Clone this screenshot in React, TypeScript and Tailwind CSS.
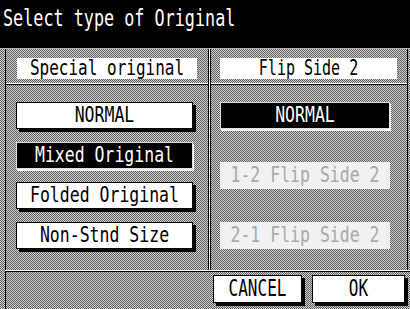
import React from "react";

const dither =
  "bg-[#d2d2d2] bg-[image:linear-gradient(45deg,#5c5c5c_25%,transparent_25%,transparent_75%,#5c5c5c_75%),linear-gradient(45deg,#5c5c5c_25%,transparent_25%,transparent_75%,#5c5c5c_75%)] bg-size-[2px_2px] bg-[position:0_0,1px_1px]";

function Label({ text, scale = "scale-y-[1.33]" }: { text: string; scale?: string }) {
  return <span className={`inline-block ${scale} origin-center whitespace-pre`}>{text}</span>;
}

type Kind = "normal" | "active" | "off";

function Btn({ text, kind, w }: { text: string; kind: Kind; w: string }) {
  const look =
    kind === "active"
      ? "bg-black text-white border border-[#e0e0e0] shadow-[1px_2px_0_#fff]"
      : kind === "off"
      ? "bg-[#f1f1f1] text-[#a8a8a8]"
      : "bg-white text-black border border-black shadow-[3px_3px_0_#000]";
  return (
    <div className={`${w} h-[27px] flex items-center justify-center text-[16.5px] leading-none ${look}`}>
      <Label text={text} />
    </div>
  );
}

function HLine() {
  return (
    <div className="flex flex-col">
      <div className="h-px bg-white" />
      <div className="h-px bg-black" />
    </div>
  );
}

export default function App() {
  return (
    <div className="w-[410px] h-[309px] overflow-hidden flex flex-col bg-black font-['DejaVu_Sans_Mono',monospace]">
      {/* title */}
      <div className="h-[48px] bg-black text-white">
        <div className="h-[37px] flex items-center pl-[3px] text-[16.8px] leading-none">
          <Label text="Select type of Original" scale="scale-y-[1.42]" />
        </div>
      </div>
      <div className="h-px bg-[#b4b4b4]" />

      <div className={`flex-1 flex flex-col ${dither}`}>
        <div className="flex h-[221px]">
          {/* left panel */}
          <div className="w-[203px] ml-[5px] border-l border-black flex flex-col">
            <div className="h-[34px] pt-[9px] pl-[11px]">
              <div className="w-[180px] h-[21px] bg-white text-black flex items-center justify-center text-[16px] leading-none">
                <Label text="Special original" scale="scale-y-[1.3]" />
              </div>
            </div>
            <HLine />
            <div className="flex flex-col gap-[13px] pt-[17px] pl-[10px]">
              <Btn text="NORMAL" kind="normal" w="w-[177px]" />
              <Btn text="Mixed Original" kind="active" w="w-[177px]" />
              <Btn text="Folded Original" kind="normal" w="w-[177px]" />
              <Btn text="Non-Stnd Size" kind="normal" w="w-[177px]" />
            </div>
          </div>

          {/* divider */}
          <div className="w-[3px] border-l border-r border-black bg-white" />

          {/* right panel */}
          <div className="w-[197px] border-r border-black flex flex-col">
            <div className="h-[34px] pt-[9px] pl-[9px]">
              <div className="w-[177px] h-[21px] bg-white text-black flex items-center justify-center text-[15px] leading-none">
                <Label text="Flip Side 2" scale="scale-y-[1.4]" />
              </div>
            </div>
            <HLine />
            <div className="flex flex-col gap-[33px] pt-[17px] pl-[9px]">
              <Btn text="NORMAL" kind="active" w="w-[170px]" />
              <Btn text="1-2 Flip Side 2" kind="off" w="w-[170px]" />
              <Btn text="2-1 Flip Side 2" kind="off" w="w-[170px]" />
            </div>
          </div>
        </div>

        <div className="ml-[5px]">
          <HLine />
        </div>

        {/* bottom buttons */}
        <div className="flex-1 flex ml-[5px] border-l border-black">
          <div className="flex gap-[10px] pt-[3px] pl-[207px]">
            <div className="w-[89px] h-[28px] bg-white text-black border border-black shadow-[3px_3px_0_#000] flex items-center justify-center text-[16px] leading-none">
              <Label text="CANCEL" scale="scale-y-[1.45]" />
            </div>
            <div className="w-[93px] h-[28px] bg-white text-black border border-black shadow-[3px_3px_0_#000] flex items-center justify-center text-[16px] leading-none">
              <Label text="OK" scale="scale-y-[1.45]" />
            </div>
          </div>
        </div>
      </div>
    </div>
  );
}
